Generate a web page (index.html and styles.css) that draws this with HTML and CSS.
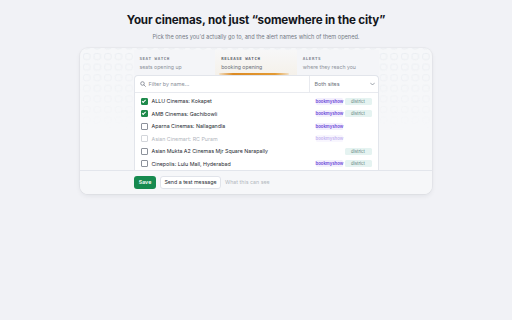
FILE: index.html
```html
<!DOCTYPE html>
<html lang="en">

<head>
    <meta charset="UTF-8">
    <meta name="viewport" content="width=device-width, initial-scale=1.0">
    <title>Your cinemas</title>
    <link rel="stylesheet" href="styles.css">
</head>

<body>
    <header class="intro">
        <h1>Your cinemas, not just “somewhere in the city”</h1>
        <p>Pick the ones you'd actually go to, and the alert names which of them opened.</p>
    </header>

    <div class="card">
        <svg class="seats" width="352" height="80" aria-hidden="true">
            <defs>
                <pattern id="seat" x="2" y="4" width="10.6" height="10.6" patternUnits="userSpaceOnUse">
                    <rect x="1.5" y="1.5" width="6.5" height="6" rx="2" fill="none" stroke="#e7eaef" stroke-width="0.8" />
                </pattern>
                <linearGradient id="fade" x1="0" y1="0" x2="0" y2="1">
                    <stop offset="0" stop-color="#fff" stop-opacity="1" />
                    <stop offset="1" stop-color="#fff" stop-opacity="0" />
                </linearGradient>
                <mask id="fadeMask">
                    <rect width="352" height="80" fill="url(#fade)" />
                </mask>
            </defs>
            <rect width="352" height="80" fill="url(#seat)" mask="url(#fadeMask)" />
        </svg>

        <div class="inner">
            <nav class="tabs">
                <div class="tab">
                    <span class="tab-title">SEAT WATCH</span>
                    <span class="tab-sub">seats opening up</span>
                </div>
                <div class="tab active">
                    <span class="tab-title">RELEASE WATCH</span>
                    <span class="tab-sub">booking opening</span>
                </div>
                <div class="tab">
                    <span class="tab-title">ALERTS</span>
                    <span class="tab-sub">where they reach you</span>
                </div>
            </nav>

            <div class="panel">
                <div class="filter-row">
                    <div class="search">
                        <svg width="6" height="6" viewBox="0 0 12 12">
                            <circle cx="5" cy="5" r="3.6" fill="none" stroke="#6b7280" stroke-width="1.4" />
                            <path d="M7.7 7.7 L10.8 10.8" stroke="#6b7280" stroke-width="1.4" stroke-linecap="round" />
                        </svg>
                        <span>Filter by name...</span>
                    </div>
                    <div class="select">
                        <span>Both sites</span>
                        <svg width="5" height="4" viewBox="0 0 10 6">
                            <path d="M1 1 L5 5 L9 1" fill="none" stroke="#6b7280" stroke-width="1.3" stroke-linecap="round" />
                        </svg>
                    </div>
                </div>

                <ul class="list">
                    <li class="row">
                        <span class="check on"></span>
                        <span class="name">ALLU Cinemas: Kokapet</span>
                        <span class="tag bms">bookmyshow</span>
                        <span class="tag district">district</span>
                    </li>
                    <li class="row">
                        <span class="check on"></span>
                        <span class="name">AMB Cinemas: Gachibowli</span>
                        <span class="tag bms">bookmyshow</span>
                        <span class="tag district">district</span>
                    </li>
                    <li class="row">
                        <span class="check"></span>
                        <span class="name">Aparna Cinemas: Nallagandla</span>
                        <span class="tag bms">bookmyshow</span>
                        <span class="tag blank"></span>
                    </li>
                    <li class="row muted">
                        <span class="check"></span>
                        <span class="name">Asian Cinemart: RC Puram</span>
                        <span class="tag bms">bookmyshow</span>
                        <span class="tag blank"></span>
                    </li>
                    <li class="row">
                        <span class="check"></span>
                        <span class="name">Asian Mukta A2 Cinemas Mjr Square Narapally</span>
                        <span class="tag district">district</span>
                    </li>
                    <li class="row">
                        <span class="check"></span>
                        <span class="name">Cinepolis: Lulu Mall, Hyderabad</span>
                        <span class="tag bms">bookmyshow</span>
                        <span class="tag district">district</span>
                    </li>
                </ul>
            </div>
        </div>

        <footer class="actions">
            <button class="btn save">Save</button>
            <button class="btn test">Send a test message</button>
            <span class="hint">What this can see</span>
        </footer>
    </div>
</body>

</html>
```

FILE: styles.css
```css
body {
    font-family: Inter, "Noto Sans", Arial, sans-serif;
    margin: 0;
    padding: 0;
    background-color: #f1f2f6;
    color: #1c1f26;
    width: 512px;
    height: 320px;
}

.intro {
    text-align: center;
    padding-top: 13px;
}

.intro h1 {
    margin: 0;
    font-size: 11.6px;
    font-weight: 700;
    letter-spacing: -0.15px;
    color: #14161b;
    line-height: 14px;
}

.intro p {
    margin: 6px 0 0;
    font-size: 5.6px;
    color: #747a85;
    line-height: 8px;
}

.card {
    position: relative;
    width: 352px;
    margin: 7px auto 0;
    background: #f6f7f9;
    border-radius: 8px;
    box-shadow: 0 2px 5px rgba(20, 25, 40, 0.07), 0 0 0 1px rgba(20, 25, 40, 0.03);
    overflow: hidden;
}

.seats {
    position: absolute;
    top: 0;
    left: 0;
}

.inner {
    position: relative;
    width: 245px;
    margin: 0 auto;
    padding-top: 2px;
}

.tabs {
    display: grid;
    grid-template-columns: repeat(3, 1fr);
    height: 25px;
    background: #f4f5f8;
}

.tab {
    display: flex;
    flex-direction: column;
    gap: 3px;
    padding: 6px 0 0 6px;
    position: relative;
}

.tab-title {
    font-family: "DejaVu Sans Mono", "Liberation Mono", monospace;
    font-size: 4.2px;
    font-weight: 700;
    letter-spacing: 0.5px;
    color: #80858f;
    line-height: 5px;
}

.tab-sub {
    font-size: 5.2px;
    color: #8d929b;
    line-height: 6px;
}

.tab.active {
    background: linear-gradient(180deg, #f7f7f8 0%, #f5f1ea 100%);
}

.tab.active .tab-title {
    color: #5e636d;
}

.tab.active .tab-sub {
    color: #6b7079;
}

.tab.active::after {
    content: "";
    position: absolute;
    left: 4px;
    right: 8px;
    bottom: 0;
    height: 2px;
    border-radius: 2px;
    background: linear-gradient(90deg, rgba(228, 150, 40, 0.2), #dc8a23 20%, #e39a33 80%, rgba(228, 150, 40, 0.2));
}

.panel {
    background: #fff;
    border: 1px solid #e2e5eb;
    border-bottom: none;
    border-radius: 4px 4px 0 0;
    height: 94px;
    overflow: hidden;
}

.filter-row {
    display: flex;
    height: 16px;
    border-bottom: 1px solid #e8eaef;
}

.search {
    flex: 1;
    display: flex;
    align-items: center;
    gap: 3px;
    padding-left: 5px;
    font-size: 5.4px;
    color: #8a8f99;
}

.select {
    width: 60px;
    display: flex;
    align-items: center;
    justify-content: space-between;
    padding: 0 3px 0 5px;
    border-left: 1px solid #e8eaef;
    font-size: 5.4px;
    color: #6c717b;
}

.list {
    list-style: none;
    margin: 0;
    padding: 2px 0 0;
}

.row {
    display: flex;
    align-items: center;
    height: 12.5px;
    padding: 0 6px 0 6px;
    font-size: 5.3px;
    color: #262a31;
}

.check {
    width: 5px;
    height: 5px;
    border: 0.8px solid #8d929b;
    border-radius: 1px;
    margin-right: 4px;
    flex-shrink: 0;
    position: relative;
}

.check.on {
    background: #1f8a4c;
    border-color: #1f8a4c;
}

.check.on::after {
    content: "";
    position: absolute;
    left: 1.5px;
    top: 0.2px;
    width: 1.3px;
    height: 2.6px;
    border: solid #fff;
    border-width: 0 0.9px 0.9px 0;
    transform: rotate(45deg);
}

.name {
    flex: 1;
    white-space: nowrap;
}

.tag {
    box-sizing: border-box;
    width: 27px;
    font-size: 4.3px;
    line-height: 7px;
    padding: 0;
    border-radius: 1.5px;
    margin-left: 2px;
    text-align: center;
    white-space: nowrap;
}

.tag.bms {
    background: #f3effd;
    color: #6a45d8;
    font-weight: 600;
}

.tag.district {
    background: #e5f3f1;
    color: #5e7f7a;
}

.row.muted {
    color: #b3b7be;
}

.row.muted .check {
    border-color: #d3d6db;
}

.row.muted .tag.bms {
    color: #c4b4f0;
    background: #f8f6fe;
}

.actions {
    position: relative;
    display: flex;
    align-items: center;
    gap: 4px;
    height: 22px;
    padding: 0 0 1px 54px;
    border-top: 1px solid #e3e6ec;
    background: #f6f7f9;
}

.btn {
    font-family: inherit;
    font-size: 5.3px;
    height: 13px;
    padding: 0;
    border-radius: 3px;
    white-space: nowrap;
    cursor: pointer;
}

.btn.save {
    width: 22px;
    background: #168a4f;
    color: #fff;
    border: none;
    font-weight: 600;
}

.btn.test {
    width: 61px;
    background: #fff;
    color: #2b2f36;
    border: 1px solid #e1e4ea;
}

.hint {
    font-size: 5.3px;
    color: #b3b8c0;
}
```
